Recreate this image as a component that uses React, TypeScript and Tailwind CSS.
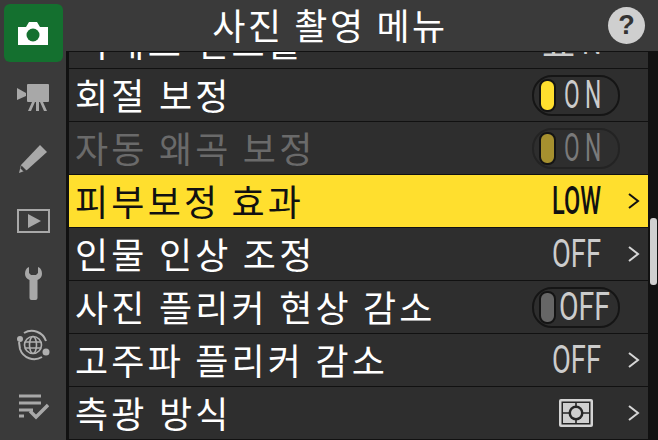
import type { ReactNode } from "react";

const krFont = "font-['Noto_Sans_CJK_KR','Noto_Sans',sans-serif]";
const valueFont = "font-['Roboto',sans-serif]";

const CameraIcon = () => (
  <svg width="32" height="26" viewBox="0 0 32 26">
    <path d="M1 7h8l3-5h8l3 5h8v18H1z" fill="#fff" />
    <circle cx="16" cy="15" r="6.5" fill="#14702f" />
  </svg>
);

const MovieIcon = () => (
  <svg width="32" height="27" viewBox="0 0 32 27" fill="#a8a8a8">
    <path d="M0 4l9 5v3L0 16z" />
    <rect x="10" y="0" width="22" height="18" rx="1" />
    <path d="M19 18h3v9h-3zM15 18h3l-4 9h-3zM23 18h3l4 9h-3z" />
  </svg>
);

const PencilIcon = () => (
  <svg width="30" height="30" viewBox="0 0 30 30">
    <path d="M22 1l7 7L9 26 1 29l2-8z" fill="#a8a8a8" />
    <path d="M3.5 21.5l5 5-3 1-3-3z" fill="#3a3a3a" />
  </svg>
);

const PlayIcon = () => (
  <svg width="33" height="24" viewBox="0 0 33 24">
    <rect x="1" y="1" width="31" height="22" fill="none" stroke="#a8a8a8" strokeWidth="2" />
    <path d="M11 5l13 7-13 7z" fill="#a8a8a8" />
  </svg>
);

const WrenchIcon = () => (
  <svg width="17" height="33" viewBox="0 0 17 33" fill="#a8a8a8">
    <path d="M4 0v6l2 2h5l2-2V0c3 1 4 4 4 7 0 3-2 5-4.500 6v18a2 2 0 0 1-2 2h-4a2 2 0 0 1-2-2V13C2 12 0 10 0 7c0-3 1-6 4-7z" />
  </svg>
);

const NetworkIcon = () => (
  <svg width="34" height="34" viewBox="0 0 34 34" fill="none" stroke="#b0b0b0">
    <path d="M8 5a15 15 0 0 1 22 8" strokeWidth="2" />
    <path d="M26 29a15 15 0 0 1-22-8l-1-7" strokeWidth="2" />
    <circle cx="4" cy="11" r="3" fill="#b0b0b0" stroke="none" />
    <circle cx="30" cy="24" r="3.500" fill="#b0b0b0" stroke="none" />
    <circle cx="17" cy="17" r="8.500" strokeWidth="1.600" />
    <ellipse cx="17" cy="17" rx="3.500" ry="8.500" strokeWidth="1.600" />
    <path d="M9 14h16M9 20h16" strokeWidth="1.600" />
  </svg>
);

const MyMenuIcon = () => (
  <svg width="31" height="26" viewBox="0 0 31 26" fill="none" stroke="#a8a8a8" strokeWidth="3">
    <path d="M1 2h22M1 9h22M1 16h14M1 22h5" />
    <path d="M12 17l6 6L30 11" strokeWidth="3.400" />
  </svg>
);

const MeterIcon = () => (
  <svg width="34" height="28" viewBox="0 0 34 28">
    <rect x="0" y="0" width="34" height="28" rx="2" fill="#d4d4d4" />
    <rect x="2.500" y="2.500" width="29" height="23" fill="#262626" />
    <rect x="4" y="4" width="26" height="20" fill="#cfcfcf" />
    <path d="M17 4v20M4 14h26" stroke="#262626" strokeWidth="1.600" />
    <circle cx="17" cy="14" r="7.500" fill="#262626" />
    <circle cx="17" cy="14" r="5" fill="#cfcfcf" />
  </svg>
);

const Chevron = ({ color = "#d6d6d6" }: { color?: string }) => (
  <svg width="12" height="16" viewBox="0 0 12 16" fill="none" stroke={color} strokeWidth="2">
    <path d="M1 1l9 7-9 7" />
  </svg>
);

const Toggle = ({ on, dim }: { on: boolean; dim?: boolean }) => (
  <div
    className={`flex h-[41px] w-[88px] items-center rounded-[20px] border-2 bg-[#2e2e2e] pl-[5px] ${
      dim ? "border-[#232323]" : "border-[#151515]"
    }`}
  >
    <div
      className={`h-[33px] w-[17px] shrink-0 rounded-[8px] border-2 border-[#141414] ${
        on ? (dim ? "bg-[#a6902f]" : "bg-[#ffdf2e]") : "bg-[#666666]"
      }`}
    />
    {on ? (
      <span
        className={`${valueFont} ml-[8px] inline-block origin-left scale-x-[0.6] text-[38px] leading-none tracking-[9px] ${
          dim ? "text-[#7a7a7a]" : "text-[#cccccc]"
        }`}
      >
        ON
      </span>
    ) : (
      <span className={`${valueFont} ml-[3px] inline-block origin-left scale-x-[0.75] text-[38px] leading-none text-[#cccccc]`}>
        OFF
      </span>
    )}
  </div>
);

const Row = ({ label, dim, active, children }: { label: string; dim?: boolean; active?: boolean; children: ReactNode }) => (
  <div
    className={`flex h-[52px] shrink-0 items-center justify-between pl-[6px] ${active ? "bg-[#ffdf2e]" : "bg-[#2e2e2e]"}`}
  >
    <span
      className={`${krFont} -mt-[3px] text-[36px] leading-none tracking-[3.2px] whitespace-pre ${
        active ? "text-[#111111]" : dim ? "text-[#6a6a6a]" : "text-white"
      }`}
    >
      {label}
    </span>
    {children}
  </div>
);

const Value = ({ text, scale, active }: { text: string; scale: string; active?: boolean }) => (
  <div className="flex items-center">
    <div className="w-[48px]">
      <span
        className={`${valueFont} inline-block origin-left text-[38px] leading-none ${scale} ${
          active ? "font-medium text-[#111111]" : "text-[#cccccc]"
        }`}
      >
        {text}
      </span>
    </div>
    <div className="ml-[28px] mr-[8px] flex">
      <Chevron color={active ? "#111111" : "#d6d6d6"} />
    </div>
  </div>
);

export default function App() {
  const sideIcons = [
    <MovieIcon key="movie" />,
    <PencilIcon key="pencil" />,
    <PlayIcon key="play" />,
    <WrenchIcon key="wrench" />,
    <NetworkIcon key="network" />,
    <MyMenuIcon key="my" />,
  ];

  return (
    <div className="flex h-[440px] w-[658px] overflow-hidden bg-[#111111]">
      {/* side tabs */}
      <div className="flex w-[66px] shrink-0 flex-col items-center bg-[#3a3a3a] pt-[4px]">
        <div className="flex h-[58px] w-[59px] items-center justify-center rounded-[6px] bg-[#14702f]">
          <CameraIcon />
        </div>
        <div className="mt-[4px] flex flex-1 flex-col items-center">
          {sideIcons.map((icon) => (
            <div key={icon.key} className="flex h-[62px] items-center justify-center">
              {icon}
            </div>
          ))}
        </div>
      </div>

      {/* main */}
      <div className="ml-[3px] flex min-w-0 flex-1 flex-col">
        <div className="relative -ml-[3px] flex h-[51px] shrink-0 items-center justify-center bg-[#3a3a3a] pr-[64px] pb-[3px]">
          <span className={`${krFont} text-[36px] leading-none tracking-[2.6px] text-white`}>사진 촬영 메뉴</span>
          <div className="absolute top-[7px] right-[13px] flex h-[37px] w-[37px] items-center justify-center rounded-full bg-[#cfcfcf]">
            <span className="font-['Liberation_Sans',sans-serif] text-[27px] leading-none font-bold text-[#333333]">?</span>
          </div>
        </div>

        <div className="flex min-h-0 flex-1">
          <div className="flex w-[579px] shrink-0 flex-col gap-[1px] bg-[#111111] pt-[1px]">
            {/* row scrolled mostly out of view */}
            <div className="relative h-[16px] shrink-0 overflow-hidden bg-[#2e2e2e]">
              <div className="absolute right-0 bottom-0 left-0">
                <Row label="비네트 컨트롤">
                  <div className="-mt-[3px] flex items-center text-[#cccccc]">
                    <span className={`${krFont} text-[36px] leading-none`}>표</span>
                    <span className={`${valueFont} ml-[7px] w-[18px] origin-left scale-x-[0.72] text-[38px] leading-none`}>N</span>
                    <div className="ml-[28px] mr-[8px] flex">
                      <Chevron />
                    </div>
                  </div>
                </Row>
              </div>
            </div>
            <Row label="회절 보정">
              <div className="mr-[28px]">
                <Toggle on />
              </div>
            </Row>
            <Row label="자동 왜곡 보정" dim>
              <div className="mr-[28px]">
                <Toggle on dim />
              </div>
            </Row>
            <Row label="피부보정 효과" active>
              <Value text="LOW" scale="scale-x-[0.62]" active />
            </Row>
            <Row label="인물 인상 조정">
              <Value text="OFF" scale="scale-x-[0.72]" />
            </Row>
            <Row label="사진 플리커 현상 감소">
              <div className="mr-[28px]">
                <Toggle on={false} />
              </div>
            </Row>
            <Row label="고주파 플리커 감소">
              <Value text="OFF" scale="scale-x-[0.72]" />
            </Row>
            <Row label="측광 방식">
              <div className="flex items-center">
                <MeterIcon />
                <div className="ml-[35px] mr-[8px] flex">
                  <Chevron />
                </div>
              </div>
            </Row>
          </div>

          {/* scrollbar */}
          <div className="flex flex-1 flex-col items-center bg-[#111111] pt-[167px]">
            <div className="h-[67px] w-[7px] rounded-[3px] bg-[#d0d0d0]" />
          </div>
        </div>
      </div>
    </div>
  );
}
